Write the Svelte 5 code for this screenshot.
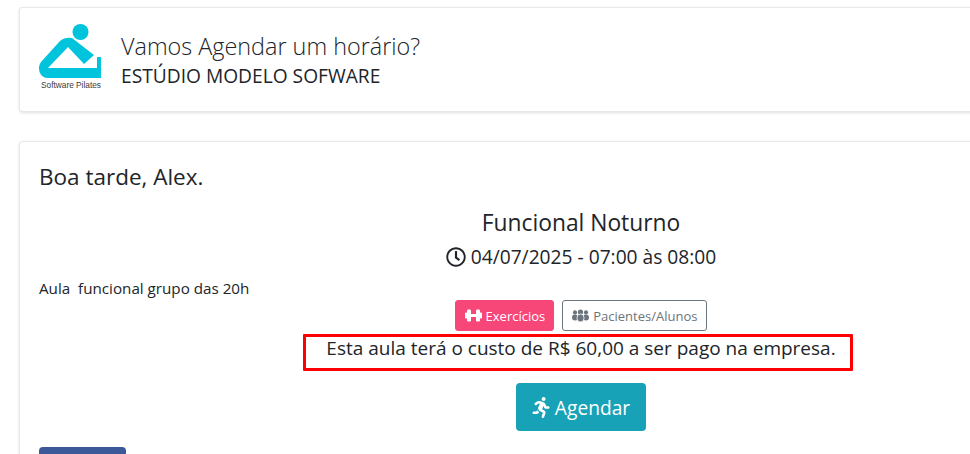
<script>
  const title = 'Funcional Noturno';
</script>

<div class="page">
  <section class="card head">
    <svg class="logo" viewBox="39 24 64 64" aria-hidden="true">
      <circle cx="80.5" cy="32" r="8" fill="#00c3dc" />
      <path fill="#00c3dc" d="M60 41 Q65 37 72 38 L94 55 L84 64 L68 47 L48 68 L97 68 L97 57 L101 57 L101 78 L48 78 Q42 78 39.5 72 Q38 66 41 62 Z" />
      <text x="41" y="87.5" class="logotext" textLength="60" lengthAdjust="spacingAndGlyphs">Software Pilates</text>
    </svg>
    <div class="headtext">
      <div class="t1">Vamos Agendar um horário?</div>
      <div class="t2">ESTÚDIO MODELO SOFWARE</div>
    </div>
  </section>

  <section class="card main">
    <div class="greet">Boa tarde, Alex.</div>
    <div class="title">{title}</div>
    <div class="date">
      <svg class="i-clock" viewBox="0 0 512 512" aria-hidden="true"><path d="M256 8C119 8 8 119 8 256s111 248 248 248 248-111 248-248S393 8 256 8zm0 448c-110.5 0-200-89.5-200-200S145.5 56 256 56s200 89.5 200 200-89.5 200-200 200zm61.8-104.4l-84.9-61.7c-3.1-2.3-4.9-5.9-4.9-9.7V116c0-6.6 5.4-12 12-12h32c6.6 0 12 5.4 12 12v141.7l66.8 48.6c5.4 3.9 6.5 11.4 2.6 16.8L334.6 349c-3.9 5.3-11.4 6.5-16.8 2.6z"/></svg>
      <span>04/07/2025 - 07:00 às 08:00</span>
    </div>
    <div class="desc">Aula&nbsp; funcional grupo das 20h</div>
    <div class="chips">
      <button class="chip pink">
        <svg class="i-sm" viewBox="0 0 17 13" aria-hidden="true">
          <rect x="0" y="3.5" width="2.5" height="6" rx="1" />
          <rect x="2" y="0.5" width="4" height="12" rx="1.2" />
          <rect x="6" y="5" width="5" height="3" />
          <rect x="11" y="0.5" width="4" height="12" rx="1.2" />
          <rect x="14.5" y="3.5" width="2.5" height="6" rx="1" />
        </svg>
        Exercícios
      </button>
      <button class="chip outline">
        <svg class="i-sm" viewBox="0 0 17 13" aria-hidden="true">
          <circle cx="3" cy="3.4" r="2.1" />
          <circle cx="14" cy="3.4" r="2.1" />
          <ellipse cx="3" cy="8.6" rx="3" ry="3" />
          <ellipse cx="14" cy="8.6" rx="3" ry="3" />
          <circle cx="8.5" cy="3" r="2.6" />
          <ellipse class="front" cx="8.5" cy="9" rx="3.6" ry="4" />
        </svg>
        Pacientes/Alunos
      </button>
    </div>
    <div class="cost">Esta aula terá o custo de R$ 60,00 a ser pago na empresa.</div>
    <div class="action">
      <button class="agendar">
        <svg class="i-run" viewBox="0 0 416 512" aria-hidden="true"><path d="M272 96c26.51 0 48-21.49 48-48S298.51 0 272 0s-48 21.49-48 48 21.49 48 48 48zM113.69 317.47l-14.8 34.52H32c-17.67 0-32 14.33-32 32s14.33 32 32 32h77.45c19.25 0 36.58-11.44 44.11-29.09l8.79-20.52-10.67-6.3c-17.32-10.23-30.06-25.37-37.99-42.61zM384 223.99h-44.03l-26.06-53.25c-12.5-25.55-35.45-44.23-61.78-50.94l-71.08-21.14c-28.3-6.8-57.77-.55-80.84 17.14l-39.67 30.41c-14.03 10.75-16.69 30.83-5.92 44.86s30.84 16.66 44.86 5.92l39.69-30.41c7.67-5.89 17.44-8 25.27-6.14l14.7 4.37-37.46 87.39c-12.62 29.48-1.31 64.01 26.3 80.31l84.98 50.17-27.47 87.73c-5.28 16.86 4.11 34.81 20.97 40.09 3.19 1 6.41 1.48 9.58 1.48 13.61 0 26.23-8.77 30.52-22.45l31.64-101.06c5.91-20.77-2.89-43.08-21.64-54.39l-61.24-36.14 31.31-78.28 20.27 41.43c8 16.34 24.92 26.89 43.11 26.89H384c17.67 0 32-14.33 32-32s-14.33-31.99-32-31.99z"/></svg>
        <span class="agendar-label">Agendar</span>
      </button>
    </div>
    <div class="back"></div>
  </section>
  <div class="redbox"></div>
</div>

<style>
  :global(body) {
    margin: 0;
    background: #fff;
    overflow: hidden;
  }
  .page {
    position: relative;
    box-sizing: border-box;
    width: 1162px;
    height: 454px;
    padding: 7px 19px 0;
    overflow: hidden;
    font-family: "Open Sans", "Noto Sans", sans-serif;
    color: #212529;
  }
  .card {
    background: #fff;
    border: 1px solid rgba(0, 0, 0, 0.09);
    border-radius: 4px;
    box-shadow: 0 1px 3px rgba(0, 0, 0, 0.12);
  }
  .head {
    box-sizing: border-box;
    height: 105px;
    display: flex;
    align-items: center;
    padding-left: 19px;
    gap: 18px;
  }
  .logo {
    width: 64px;
    height: 64px;
    flex: none;
    overflow: visible;
    margin-bottom: 7px;
  }
  .logotext {
    font-family: "Liberation Sans", sans-serif;
    font-size: 9.6px;
    fill: #3d3d3d;
  }
  .t1 {
    font-size: 23.4px;
    font-weight: 300;
    line-height: 32px;
  }
  .t2 {
    font-size: 19.2px;
    line-height: 28px;
  }
  .main {
    margin-top: 29px;
    padding: 19px 19px 0;
    height: 400px;
  }
  .greet {
    font-size: 22.5px;
    line-height: 32px;
  }
  .title {
    text-align: center;
    font-size: 22.8px;
    line-height: 32px;
    margin-top: 14px;
  }
  .date {
    display: flex;
    justify-content: center;
    align-items: center;
    gap: 5px;
    font-size: 19.2px;
    line-height: 28px;
    margin-top: 4px;
  }
  .i-clock {
    width: 20px;
    height: 20px;
    fill: #212529;
  }
  .desc {
    font-size: 15.2px;
    line-height: 20px;
    margin-top: 7px;
  }
  .chips {
    display: flex;
    justify-content: center;
    gap: 8px;
    margin-top: 2px;
  }
  .chip {
    box-sizing: border-box;
    height: 31px;
    display: inline-flex;
    align-items: center;
    gap: 4px;
    padding: 0 8px;
    font: inherit;
    font-size: 13px;
    border-radius: 3px;
    border: 1px solid;
  }
  .pink {
    background: #f64778;
    border-color: #f64778;
    color: #fff;
    padding: 0 8px 0 9px;
  }
  .pink .i-sm {
    fill: #fff;
  }
  .outline {
    background: #fff;
    border-color: #6c757d;
    color: #6c757d;
    padding: 0 9px;
  }
  .outline .i-sm {
    fill: #6c757d;
  }
  .front {
    stroke: #fff;
    stroke-width: 0.8;
  }
  .i-sm {
    width: 17px;
    height: 13px;
  }
  .cost {
    text-align: center;
    font-size: 19px;
    line-height: 26px;
    margin-top: 4px;
  }
  .action {
    display: flex;
    justify-content: center;
    margin-top: 22px;
  }
  .agendar {
    box-sizing: border-box;
    width: 130px;
    height: 48px;
    display: inline-flex;
    align-items: center;
    justify-content: center;
    gap: 5px;
    background: #17a2b8;
    border: 0;
    border-radius: 4px;
    color: #fff;
    font: inherit;
    font-size: 19.2px;
  }
  .agendar-label {
    padding-top: 1px;
  }
  .i-run {
    width: 18px;
    height: 21px;
    fill: #fff;
  }
  .back {
    width: 87px;
    height: 40px;
    margin-top: 16px;
    background: #3b5998;
    border-radius: 4px;
  }
  .redbox {
    position: absolute;
    left: 303px;
    top: 334px;
    width: 550px;
    height: 37px;
    box-sizing: border-box;
    border: 3px solid #f00;
    border-radius: 1px;
    pointer-events: none;
  }
</style>
